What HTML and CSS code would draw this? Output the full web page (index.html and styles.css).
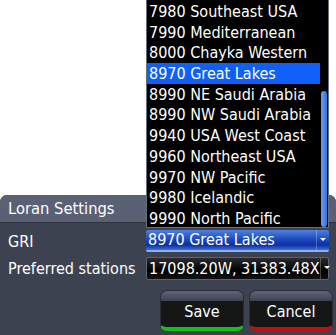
FILE: index.html
```html
<!DOCTYPE html>
<html>
<head>
  <meta charset="UTF-8">
  <title>Loran Settings</title>
  <link rel="stylesheet" href="styles.css">
</head>
<body>
  <div class="screen">
    <!-- settings dialog -->
    <div class="dialog">
      <div class="title">Loran Settings</div>
      <div class="fields">
        <div class="label">GRI</div>
        <div class="select select-active">
          <span>8970 Great Lakes</span>
          <span class="arrow"></span>
        </div>
        <div class="label">Preferred stations</div>
        <div class="select">
          <span>17098.20W, 31383.48X</span>
          <span class="arrow"></span>
        </div>
      </div>
      <div class="buttons">
        <div class="button save">Save</div>
        <div class="button cancel">Cancel</div>
      </div>
    </div>

    <!-- open GRI dropdown -->
    <div class="menu">
      <ul>
        <li>7980 Southeast USA</li>
        <li>7990 Mediterranean</li>
        <li>8000 Chayka Western</li>
        <li class="selected">8970 Great Lakes</li>
        <li>8990 NE Saudi Arabia</li>
        <li>8990 NW Saudi Arabia</li>
        <li>9940 USA West Coast</li>
        <li>9960 Northeast USA</li>
        <li>9970 NW Pacific</li>
        <li>9980 Icelandic</li>
        <li>9990 North Pacific</li>
      </ul>
      <div class="scrollbar"></div>
    </div>
  </div>
</body>
</html>
```

FILE: styles.css
```css
body {
    margin: 0;
    background: #fff;
    font-family: "DejaVu Sans Condensed", "DejaVu Sans", sans-serif;
    font-size: 16px;
    color: #fff;
}
.screen {
    position: relative;
    width: 336px;
    height: 335px;
    overflow: hidden;
}
.dialog {
    margin-top: 195px;
    width: 336px;
    height: 140px;
    background: #3d4251;
    border-radius: 7px 7px 0 0;
    overflow: hidden;
}
.title {
    height: 27px;
    line-height: 27px;
    padding-left: 8px;
    font-size: 16.4px;
    background: #5b6174;
    border-bottom: 1px solid #2e323d;
}
.fields {
    display: grid;
    grid-template-columns: 146px 183px;
    grid-template-rows: 22px 23px;
    row-gap: 5px;
    padding-top: 7px;
}
.label {
    padding-left: 8px;
    line-height: 23px;
    white-space: nowrap;
}
.select {
    display: flex;
    align-items: center;
    justify-content: space-between;
    padding-left: 2px;
    border: 1px solid #5d6272;
    border-radius: 2px;
    background: linear-gradient(#2a2c2e, #000 60%, #111);
    box-sizing: border-box;
    line-height: 20px;
    white-space: nowrap;
}
.select-active {
    border: none;
    border-bottom: 2px solid #8fb0e8;
    background: linear-gradient(#4f80e0, #1d4cc0 45%, #0b2fa0 75%, #3d6fd8);
}
.arrow {
    width: 12px;
    height: 100%;
    border-left: 1px solid rgba(255, 255, 255, 0.25);
    position: relative;
}
.arrow::after {
    content: "";
    position: absolute;
    left: 3px;
    top: 8px;
    border-left: 3px solid transparent;
    border-right: 3px solid transparent;
    border-top: 3px solid #fff;
}
.buttons {
    display: flex;
    justify-content: flex-end;
    gap: 5px;
    padding: 10px 3px 0 0;
}
.button {
    width: 84px;
    height: 41px;
    box-sizing: border-box;
    border-radius: 7px;
    text-align: center;
    padding-top: 11px;
    background: linear-gradient(#5f6576, #3d4250 27%, #151717 28%, #151717);
    border: 1px solid #2a2d35;
}
.save {
    border-bottom: 4px solid #12c21a;
}
.cancel {
    border-bottom: 4px solid #c01010;
}
.menu {
    position: absolute;
    left: 146px;
    top: -2px;
    width: 183px;
    height: 230px;
    background: #000;
    border: 1px solid #6a6e78;
    box-sizing: border-box;
}
.menu ul {
    list-style: none;
    margin: 0;
    padding: 2px 0 0 0;
}
.menu li {
    height: 20.7px;
    line-height: 21.5px;
    padding-left: 2px;
    width: 171px;
    white-space: nowrap;
}
.menu li.selected {
    background: #0f60f8;
}
.scrollbar {
    position: absolute;
    left: 174px;
    top: 92px;
    width: 6px;
    height: 136px;
    border-radius: 3px;
    background: linear-gradient(90deg, #6e9ff0, #3470e0);
}
```
